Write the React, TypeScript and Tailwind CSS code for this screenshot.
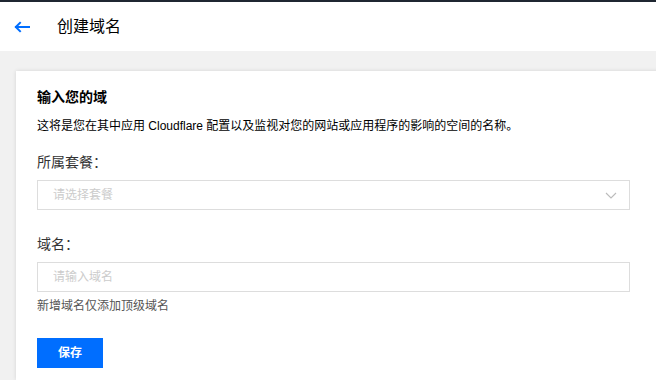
const font = "font-['Liberation_Sans','Noto_Sans_CJK_SC',sans-serif]";

const BackArrow = () => (
  <svg width="16" height="12" viewBox="0 0 16 12" fill="none" className="shrink-0">
    <path d="M15 6H2M6 1.8 1.8 6 6 10.2" stroke="#006eff" strokeWidth="2" strokeLinecap="square" />
  </svg>
);

const Chevron = () => (
  <svg width="12" height="7" viewBox="0 0 12 7" fill="none">
    <path d="M1 1l5 5 5-5" stroke="#bbbbbb" strokeWidth="1.1" />
  </svg>
);

export default function App() {
  return (
    <div className={`${font} flex h-[380px] w-[656px] flex-col overflow-hidden bg-[#f1f1f1]`}>
      <div className="h-[2px] bg-[#1f2631]" />
      <header className="flex h-[49px] items-center gap-[27px] bg-white pl-[14px]">
        <BackArrow />
        <h1 className="text-[16px] leading-6 text-black">创建域名</h1>
      </header>

      <div className="ml-4 mt-5 w-[680px] flex-1 bg-white pl-[21px] pt-4 shadow-[0_0_4px_rgba(0,0,0,0.12)]">
        <h2 className="text-[14px] font-bold leading-5 text-black">输入您的域</h2>
        <p className="mt-[10px] text-[12px] leading-[18px] text-black">
          这将是您在其中应用 Cloudflare 配置以及监视对您的网站或应用程序的影响的空间的名称。
        </p>

        <label className="mt-[17px] block text-[14px] leading-5 text-[#333]">所属套餐：</label>
        <div className="mt-2 flex h-[30px] w-[593px] items-center justify-between border border-[#dddddd] pl-[15px] pr-[12px]">
          <span className="text-[12px] text-[#cccccc]">请选择套餐</span>
          <Chevron />
        </div>

        <label className="mt-[24px] block text-[14px] leading-5 text-[#333]">域名：</label>
        <input
          placeholder="请输入域名"
          className="mt-2 block h-[30px] w-[593px] border border-[#dddddd] pl-[15px] text-[12px] outline-none placeholder:text-[#cccccc]"
        />
        <p className="mt-[5px] text-[12px] leading-[18px] text-[#555]">新增域名仅添加顶级域名</p>

        <button className="mt-[23px] flex h-[30px] w-[66px] items-center justify-center bg-[#006eff] text-[12px] font-bold text-white">
          保存
        </button>
      </div>
    </div>
  );
}
